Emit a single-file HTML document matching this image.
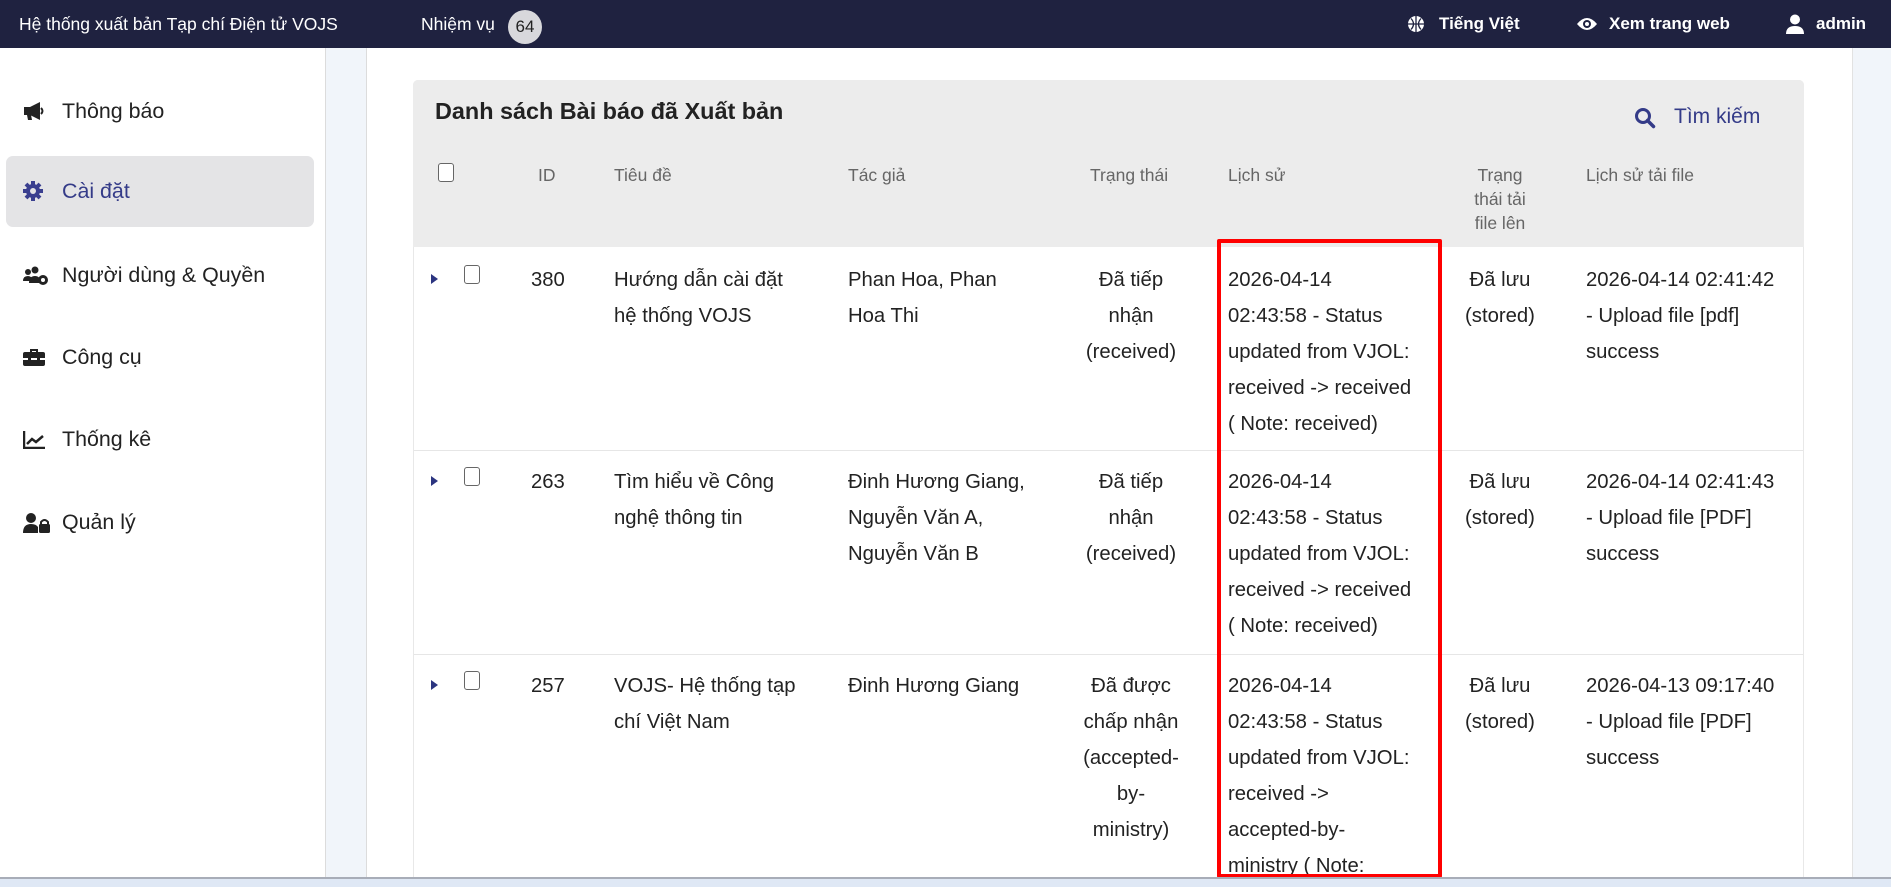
<!DOCTYPE html>
<html><head><meta charset="utf-8"><style>
*{margin:0;padding:0;box-sizing:border-box}
body{width:1891px;height:887px;overflow:hidden;background:#fff;font-family:"Liberation Sans","DejaVu Sans",sans-serif;color:#222;position:relative}
.a{position:absolute;white-space:nowrap}
.top{position:absolute;left:0;top:0;width:1891px;height:48px;background:#1f2240;color:#fff;font-size:17.5px}
.sb{font-size:21.4px;color:#222}
.t{font-size:20.3px;line-height:36px;color:#222}
.h{font-size:17.5px;line-height:35px;color:#666}
.cb{position:absolute;width:16px;height:19px;border:1.5px solid #666;border-radius:3px;background:#fff}
.tri{position:absolute;width:0;height:0;border-left:7px solid #2c3580;border-top:5px solid transparent;border-bottom:5px solid transparent}
.c{text-align:center}
</style></head><body>
<div class="top">
 <div class="a" style="left:19px;top:14px">Hệ thống xuất bản Tạp chí Điện tử VOJS</div>
 <div class="a" style="left:421px;top:14px">Nhiệm vụ</div>
 <div class="a" style="left:508px;top:10px;width:34px;height:34px;border-radius:17px;background:#d8d8dc;color:#222;text-align:center;line-height:34px;font-size:17px">64</div>
 <svg class="a" style="left:1407px;top:15px" width="18" height="18" viewBox="0 0 18 18"><circle cx="9" cy="9" r="8" fill="#fff"/><path d="M1 9h16M9 1v16M4 3.5q5 5.5 0 11M14 3.5q-5 5.5 0 11" stroke="#1f2240" stroke-width="1.3" fill="none"/></svg>
 <div class="a" style="left:1439px;top:14px;font-weight:bold;font-size:17px">Tiếng Việt</div>
 <svg class="a" style="left:1576px;top:16px" width="22" height="16" viewBox="0 0 22 16"><path d="M1 8Q11 -4 21 8Q11 20 1 8z" fill="#fff"/><circle cx="11" cy="8" r="4" fill="#1f2240"/><circle cx="11" cy="8" r="2" fill="#fff"/></svg>
 <div class="a" style="left:1609px;top:14px;font-weight:bold;font-size:17px">Xem trang web</div>
 <svg class="a" style="left:1786px;top:14px" width="18" height="20" viewBox="0 0 18 20"><circle cx="9" cy="5.5" r="5" fill="#fff"/><path d="M0 20q0-8 9-8q9 0 9 8z" fill="#fff"/></svg>
 <div class="a" style="left:1816px;top:14px;font-weight:bold;font-size:17px">admin</div>
</div>
<div class="a" style="left:6px;top:156px;width:308px;height:71px;background:#e4e4e6;border-radius:7px"></div>
<div class="a" style="left:325px;top:48px;width:42px;height:839px;background:#f1f5fa;border-left:1px solid #dcdcdc;border-right:1px solid #dcdcdc"></div>
<div class="a" style="left:1852px;top:48px;width:39px;height:839px;background:#f1f5fa;border-left:1px solid #e2e2e2"></div>
<svg class="a" style="left:23px;top:101px" width="22" height="20" viewBox="0 0 22 20"><path d="M1 6h6l10-5v18l-10-5H1z M4 14h4l1 5H5z" fill="#222"/><path d="M18 7q3 3 0 6" stroke="#222" stroke-width="2" fill="none"/></svg>
<div class="a sb" style="left:62px;top:99px">Thông báo</div>
<svg class="a" style="left:23px;top:181px" width="20" height="20" viewBox="0 0 20 20"><circle cx="10" cy="10" r="7" fill="#3a3f8f"/><path d="M10 0v20M0 10h20M3 3l14 14M17 3L3 17" stroke="#3a3f8f" stroke-width="4"/><circle cx="10" cy="10" r="3" fill="#e4e4e6"/></svg>
<div class="a sb" style="left:62px;top:179px;color:#343b88">Cài đặt</div>
<svg class="a" style="left:23px;top:266px" width="26" height="20" viewBox="0 0 26 20"><circle cx="5" cy="6" r="3" fill="#222"/><circle cx="12" cy="4" r="3.5" fill="#222"/><path d="M0 15q0-5 5-5q4 0 5 5zM6 17q0-7 6-7q5 0 6 6v1z" fill="#222"/><circle cx="20" cy="14" r="5" fill="#222"/><circle cx="20" cy="14" r="2" fill="#fff"/></svg>
<div class="a sb" style="left:62px;top:263px">Người dùng &amp; Quyền</div>
<svg class="a" style="left:23px;top:348px" width="22" height="18" viewBox="0 0 22 18"><path d="M7 4V1h8v3h-2V3H9v1z" fill="#222"/><rect x="0" y="4" width="22" height="14" rx="2" fill="#222"/><rect x="0" y="10" width="22" height="2" fill="#fff"/><rect x="5" y="9" width="3" height="4" fill="#222"/><rect x="14" y="9" width="3" height="4" fill="#222"/></svg>
<div class="a sb" style="left:62px;top:345px">Công cụ</div>
<svg class="a" style="left:23px;top:431px" width="22" height="18" viewBox="0 0 22 18"><path d="M1 0v17h21" stroke="#222" stroke-width="2.5" fill="none"/><path d="M4 13l5-5 4 3 7-6" stroke="#222" stroke-width="2.5" fill="none"/></svg>
<div class="a sb" style="left:62px;top:427px">Thống kê</div>
<svg class="a" style="left:23px;top:513px" width="27" height="20" viewBox="0 0 27 20"><circle cx="8" cy="5" r="5" fill="#222"/><path d="M0 20q0-9 8-9q5 0 7 3v6z" fill="#222"/><rect x="16" y="11" width="11" height="9" rx="1.5" fill="#222"/><path d="M18 12v-3q3.5-4 7 0v3" stroke="#222" stroke-width="2" fill="none"/></svg>
<div class="a sb" style="left:62px;top:510px">Quản lý</div>
<div class="a" style="left:413px;top:80px;width:1391px;height:807px;border:1px solid #e8e8e8;border-bottom:none;border-radius:5px 5px 0 0;background:#fff"></div>
<div class="a" style="left:413px;top:80px;width:1391px;height:167px;background:#ececec;border-radius:5px 5px 0 0"></div>
<div class="a" style="left:435px;top:98px;font-size:23.4px;font-weight:bold;color:#222">Danh sách Bài báo đã Xuất bản</div>
<svg class="a" style="left:1634px;top:107px" width="22" height="22" viewBox="0 0 22 22"><circle cx="9" cy="9" r="6.5" stroke="#343b88" stroke-width="3" fill="none"/><path d="M13.5 13.5l6 6" stroke="#343b88" stroke-width="3.5" stroke-linecap="round"/></svg>
<div class="a" style="left:1674px;top:105px;font-size:21px;color:#343b88">Tìm kiếm</div>
<div class="cb" style="left:438px;top:163px"></div>
<div class="a h" style="left:538px;top:158px">ID</div>
<div class="a h" style="left:614px;top:158px">Tiêu đề</div>
<div class="a h" style="left:848px;top:158px">Tác giả</div>
<div class="a h" style="left:1090px;top:158px">Trạng thái</div>
<div class="a h" style="left:1228px;top:158px">Lịch sử</div>
<div class="a h c" style="left:1460px;width:80px;white-space:normal;line-height:24px;top:163px">Trạng<br>thái tải<br>file lên</div>
<div class="a h" style="left:1586px;top:158px">Lịch sử tải file</div>
<div class="a" style="left:414px;top:450px;width:1389px;height:1px;background:#e6e6e6"></div>
<div class="a" style="left:414px;top:654px;width:1389px;height:1px;background:#e6e6e6"></div>

<div class="tri" style="left:431px;top:274px"></div><div class="cb" style="left:464px;top:265px"></div>
<div class="a t" style="left:531px;top:262px">380</div>
<div class="a t" style="left:614px;top:262px">Hướng dẫn cài đặt<br>hệ thống VOJS</div>
<div class="a t" style="left:848px;top:262px">Phan Hoa, Phan<br>Hoa Thi</div>
<div class="a t c" style="left:1071px;top:262px;width:120px">Đã tiếp<br>nhận<br>(received)</div>
<div class="a t" style="left:1228px;top:262px">2026-04-14<br>02:43:58 - Status<br>updated from VJOL:<br>received -&gt; received<br>( Note: received)</div>
<div class="a t c" style="left:1450px;top:262px;width:100px">Đã lưu<br>(stored)</div>
<div class="a t" style="left:1586px;top:262px">2026-04-14 02:41:42<br>- Upload file [pdf]<br>success</div>

<div class="tri" style="left:431px;top:476px"></div><div class="cb" style="left:464px;top:467px"></div>
<div class="a t" style="left:531px;top:464px">263</div>
<div class="a t" style="left:614px;top:464px">Tìm hiểu về Công<br>nghệ thông tin</div>
<div class="a t" style="left:848px;top:464px">Đinh Hương Giang,<br>Nguyễn Văn A,<br>Nguyễn Văn B</div>
<div class="a t c" style="left:1071px;top:464px;width:120px">Đã tiếp<br>nhận<br>(received)</div>
<div class="a t" style="left:1228px;top:464px">2026-04-14<br>02:43:58 - Status<br>updated from VJOL:<br>received -&gt; received<br>( Note: received)</div>
<div class="a t c" style="left:1450px;top:464px;width:100px">Đã lưu<br>(stored)</div>
<div class="a t" style="left:1586px;top:464px">2026-04-14 02:41:43<br>- Upload file [PDF]<br>success</div>

<div class="tri" style="left:431px;top:680px"></div><div class="cb" style="left:464px;top:671px"></div>
<div class="a t" style="left:531px;top:668px">257</div>
<div class="a t" style="left:614px;top:668px">VOJS- Hệ thống tạp<br>chí Việt Nam</div>
<div class="a t" style="left:848px;top:668px">Đinh Hương Giang</div>
<div class="a t c" style="left:1066px;top:668px;width:130px">Đã được<br>chấp nhận<br>(accepted-<br>by-<br>ministry)</div>
<div class="a t" style="left:1228px;top:668px">2026-04-14<br>02:43:58 - Status<br>updated from VJOL:<br>received -&gt;<br>accepted-by-<br>ministry ( Note:</div>
<div class="a t c" style="left:1450px;top:668px;width:100px">Đã lưu<br>(stored)</div>
<div class="a t" style="left:1586px;top:668px">2026-04-13 09:17:40<br>- Upload file [PDF]<br>success</div>

<div class="a" style="left:1217px;top:239px;width:225px;height:639px;border:4px solid #f00;border-radius:2px"></div>
<div class="a" style="left:0;top:877px;width:1891px;height:10px;background:#dfe8f5;border-top:2px solid #a8adb8"></div>
</body></html>
